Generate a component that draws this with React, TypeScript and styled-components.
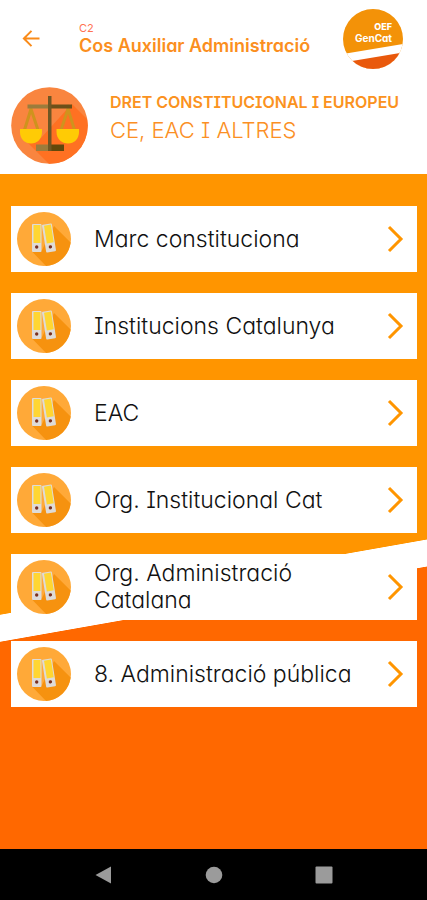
import React from "react";
import styled, { createGlobalStyle } from "styled-components";

const ORANGE = "#ff9500";
const DEEP_ORANGE = "#ff6800";

const GlobalStyle = createGlobalStyle`
  *, *::before, *::after { box-sizing: border-box; }
  body {
    margin: 0;
    background: #fff;
    font-family: Inter, "Open Sans", sans-serif;
    font-feature-settings: "cv08", "cv11";
  }
`;

const Screen = styled.div`
  display: flex;
  flex-direction: column;
  min-height: 100vh;
`;

const Header = styled.header`
  background: #fff;
  padding: 9px 24px 10px 11px;
`;

const TopBar = styled.div`
  display: flex;
  align-items: center;
  min-height: 60px;
`;

const IconButton = styled.button`
  display: flex;
  align-items: center;
  justify-content: center;
  padding: 0;
  border: 0;
  background: none;
  cursor: pointer;
`;

const BackButton = styled(IconButton)`
  width: 40px;
  height: 40px;
`;

const Heading = styled.div`
  flex: 1;
  min-width: 0;
  padding-left: 28px;
`;

const Level = styled.p`
  margin: 0;
  font-size: 11px;
  line-height: 14px;
  color: #ff7352;
`;

const Title = styled.h1`
  margin: 0;
  font-size: 18px;
  line-height: 22px;
  font-weight: 600;
  color: #fb8f1e;
`;

const Subject = styled.section`
  display: flex;
  align-items: flex-start;
  gap: 22px;
  margin-top: 18px;
  margin-right: -16px;
`;

const SubjectText = styled.div`
  padding-top: 4px;
`;

const SubjectName = styled.h2`
  margin: 0;
  font-size: 16px;
  line-height: 22px;
  font-weight: 600;
  color: #fb9220;
`;

const SubjectTopic = styled.p`
  margin: 0;
  font-size: 22px;
  line-height: 34px;
  font-weight: 300;
  color: #fb8f24;
`;

const Content = styled.main`
  flex: 1;
  padding: 32px 10px 32px 11px;
  background: linear-gradient(
    170deg,
    ${ORANGE} 58.7%,
    #fff 58.8%,
    #fff 62.3%,
    ${DEEP_ORANGE} 62.4%
  );
`;

const TopicList = styled.ul`
  display: flex;
  flex-direction: column;
  gap: 21px;
  margin: 0;
  padding: 0;
  list-style: none;
`;

const TopicLink = styled.a`
  display: flex;
  align-items: center;
  min-height: 66px;
  padding: 6px 12px 6px 6px;
  background: #fff;
  color: #111;
  text-decoration: none;
`;

const TopicName = styled.span`
  flex: 1;
  min-width: 0;
  padding: 0 30px 0 23px;
  font-size: 23px;
  line-height: 27px;
  font-weight: 300;
`;

const SystemBar = styled.nav`
  display: flex;
  align-items: center;
  justify-content: center;
  gap: 70px;
  height: 51px;
  background: #000;
`;

const SystemButton = styled(IconButton)`
  width: 40px;
  height: 40px;
`;

const Logo = () => (
  <svg width="60" height="60" viewBox="0 0 60 60" role="img" aria-label="OEF GenCat">
    <defs>
      <clipPath id="logo-disc">
        <circle cx="30" cy="30" r="30" />
      </clipPath>
    </defs>
    <g clipPath="url(#logo-disc)">
      <rect width="60" height="60" fill="#f39208" />
      <path d="M0 45 L60 35 V60 H0Z" fill="#fff" />
      <path d="M0 53.5 L60 43.5 V60 H0Z" fill="#e9590c" />
    </g>
    <text x="49" y="21" textAnchor="end" fontSize="9" fontWeight="800" fill="#fff">OEF</text>
    <text x="49" y="33" textAnchor="end" fontSize="10" fontWeight="700" fill="#fff">GenCat</text>
  </svg>
);

const Scales = () => (
  <svg width="77" height="77" viewBox="0 0 77 77" aria-hidden="true">
    <defs>
      <clipPath id="scales-disc">
        <circle cx="38.5" cy="38.5" r="38.3" />
      </clipPath>
    </defs>
    <g clipPath="url(#scales-disc)">
      <rect width="77" height="77" fill="#f9853f" />
      <path d="M61 17 L77 33 V77 H38 L10 49 L30 51 L58 20Z" fill="#ff7122" />
    </g>
    <g fill="none" stroke="#cf931d" strokeWidth="3">
      <path d="M13.5 43 L20 22 L27 43" />
      <path d="M50 43 L57 22 L63.5 43" />
    </g>
    <path d="M16.5 17.5 H38 V21.5 H16.5Z" fill="#9b7c3c" />
    <path d="M39 17.5 H61 V21.5 H39Z" fill="#6b5019" />
    <path d="M25 57.5 H39 V64 H25Z" fill="#9b7c3c" />
    <path d="M39 57.5 H53 V64 H39Z" fill="#62480b" />
    <path d="M37 9 H40.5 V64 H37Z" fill="#705724" />
    <path d="M9 42 H31 V45 C31 52 26 56.5 20 56.5 S9 52 9 45Z" fill="#ffcb05" />
    <path d="M45.5 42 H68 V45 C68 52 63 56.5 57 56.5 S45.5 52 45.5 45Z" fill="#ffcb05" />
  </svg>
);

const Binders = () => (
  <svg width="54" height="54" viewBox="0 0 54 54" aria-hidden="true">
    <circle cx="27" cy="27" r="27" fill="#ffa938" />
    <path d="M37 14 L53.6 30.6 A27 27 0 0 1 29 54 L15 39.5 L25 38Z" fill="#f6920f" />
    <g>
      <rect x="15" y="12" width="9.5" height="28" rx="1" fill="#dedbd8" />
      <rect x="16.5" y="13" width="7" height="18" fill="#ffd632" />
      <circle cx="19.7" cy="35" r="1.7" fill="#7b3020" />
    </g>
    <g transform="rotate(-9 32 26)">
      <rect x="27" y="12" width="10" height="28" rx="1" fill="#dedbd8" />
      <rect x="29" y="13" width="7" height="18" fill="#ffd632" />
      <circle cx="32" cy="35" r="1.7" fill="#7b3020" />
    </g>
  </svg>
);

const Chevron = () => (
  <svg width="18" height="28" viewBox="0 0 18 28" aria-hidden="true">
    <path d="M2 2 L14 14 L2 26" fill="none" stroke={ORANGE} strokeWidth="3" />
  </svg>
);

const topics = [
  "Marc constituciona",
  "Institucions Catalunya",
  "EAC",
  "Org. Institucional Cat",
  "Org. Administració Catalana",
  "8. Administració pública",
];

export default function App() {
  return (
    <Screen>
      <GlobalStyle />
      <Header>
        <TopBar>
          <BackButton type="button" aria-label="Enrere">
            <svg width="18" height="18" viewBox="0 0 18 18" aria-hidden="true">
              <path
                d="M17.5 8.5 H2 M9.5 0.9 L1.9 8.5 L9.5 16.1"
                fill="none"
                stroke="#f98b1a"
                strokeWidth="2"
              />
            </svg>
          </BackButton>
          <Heading>
            <Level>C2</Level>
            <Title>Cos Auxiliar Administració</Title>
          </Heading>
          <Logo />
        </TopBar>
        <Subject>
          <Scales />
          <SubjectText>
            <SubjectName>DRET CONSTITUCIONAL I EUROPEU</SubjectName>
            <SubjectTopic>CE, EAC I ALTRES</SubjectTopic>
          </SubjectText>
        </Subject>
      </Header>
      <Content>
        <TopicList>
          {topics.map((topic) => (
            <li key={topic}>
              <TopicLink href="#">
                <Binders />
                <TopicName>{topic}</TopicName>
                <Chevron />
              </TopicLink>
            </li>
          ))}
        </TopicList>
      </Content>
      <SystemBar aria-label="Sistema">
        <SystemButton type="button" aria-label="Back">
          <svg width="18" height="18" viewBox="0 0 18 18" aria-hidden="true">
            <path d="M0.5 9 L16 0.5 V17.5Z" fill="#9b9b9b" />
          </svg>
        </SystemButton>
        <SystemButton type="button" aria-label="Home">
          <svg width="18" height="18" viewBox="0 0 18 18" aria-hidden="true">
            <circle cx="9" cy="9" r="8.3" fill="#9b9b9b" />
          </svg>
        </SystemButton>
        <SystemButton type="button" aria-label="Recents">
          <svg width="18" height="18" viewBox="0 0 18 18" aria-hidden="true">
            <rect x="0.5" y="0.5" width="17" height="17" rx="1" fill="#9b9b9b" />
          </svg>
        </SystemButton>
      </SystemBar>
    </Screen>
  );
}
